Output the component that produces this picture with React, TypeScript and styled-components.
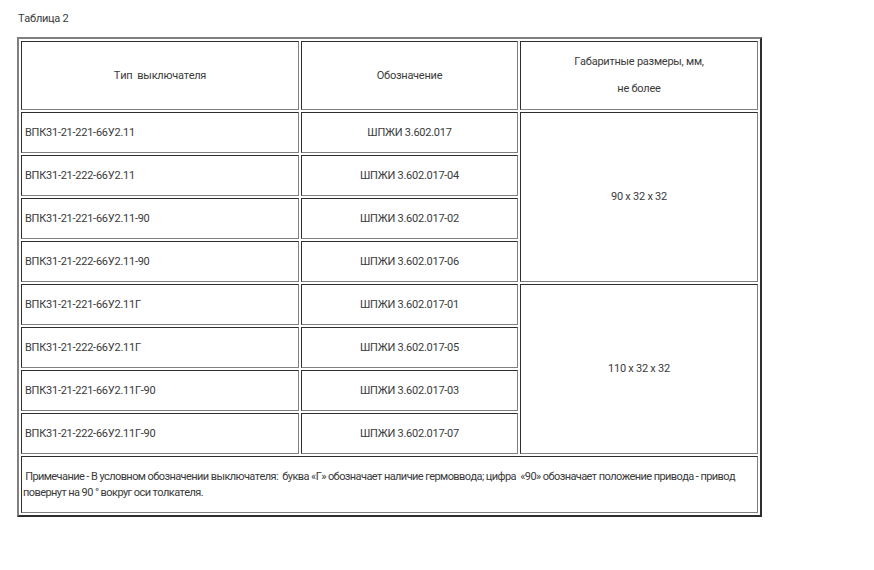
import React from 'react'
import styled, { createGlobalStyle } from 'styled-components'

const GlobalStyle = createGlobalStyle`
  html, body {
    margin: 0;
    padding: 0;
    background: #fff;
  }
  body {
    font-family: 'Roboto', 'Liberation Sans', sans-serif;
    font-size: 11px;
    letter-spacing: -0.25px;
    font-kerning: none;
    color: #3a3a3a;
  }
`

const Page = styled.div`
  padding: 12px 0 0 17px;
`

const Caption = styled.div`
  height: 25px;
  line-height: 14px;
  padding-left: 1px;
`

const Table = styled.table`
  box-sizing: border-box;
  width: 745px;
  table-layout: fixed;
  border-collapse: separate;
  border-spacing: 2px;
  border: 2px solid;
  border-color: #808080 #2e2e2e #2e2e2e #808080;
`

const Cell = styled.td<{ $align?: 'left' | 'center'; $h: number }>`
  box-sizing: border-box;
  height: ${(p) => p.$h}px;
  padding: 0 3px;
  border: 1px solid;
  border-color: #2e2e2e #808080 #808080 #2e2e2e;
  text-align: ${(p) => p.$align || 'left'};
  vertical-align: middle;
  line-height: 14px;
`

const HeadLine = styled.p`
  margin: 0;
  & + & {
    margin-top: 13px;
  }
`

const Note = styled(Cell)`
  padding: 0 1px;
  line-height: 16px;
  letter-spacing: -0.58px;
`

const rows = [
  ['ВПК31-21-221-66У2.11', 'ШПЖИ 3.602.017'],
  ['ВПК31-21-222-66У2.11', 'ШПЖИ 3.602.017-04'],
  ['ВПК31-21-221-66У2.11-90', 'ШПЖИ 3.602.017-02'],
  ['ВПК31-21-222-66У2.11-90', 'ШПЖИ 3.602.017-06'],
  ['ВПК31-21-221-66У2.11Г', 'ШПЖИ 3.602.017-01'],
  ['ВПК31-21-222-66У2.11Г', 'ШПЖИ 3.602.017-05'],
  ['ВПК31-21-221-66У2.11Г-90', 'ШПЖИ 3.602.017-03'],
  ['ВПК31-21-222-66У2.11Г-90', 'ШПЖИ 3.602.017-07'],
]

const App: React.FC = () => {
  return (
    <Page>
      <GlobalStyle />
      <Caption>Таблица 2</Caption>
      <Table>
        <colgroup>
          <col style={{ width: 278 }} />
          <col style={{ width: 217 }} />
          <col style={{ width: 238 }} />
        </colgroup>
        <tbody>
          <tr>
            <Cell $h={69} $align="center">
              Тип&nbsp; выключателя
            </Cell>
            <Cell $h={69} $align="center">
              Обозначение
            </Cell>
            <Cell $h={69} $align="center">
              <HeadLine>Габаритные размеры, мм,</HeadLine>
              <HeadLine>не более</HeadLine>
            </Cell>
          </tr>
          {rows.map(([type, code], i) => (
            <tr key={type}>
              <Cell $h={41}>{type}</Cell>
              <Cell $h={41} $align="center">
                {code}
              </Cell>
              {i % 4 === 0 && (
                <Cell $h={41} $align="center" rowSpan={4}>
                  {i === 0 ? '90 х 32 х 32' : '110 х 32 х 32'}
                </Cell>
              )}
            </tr>
          ))}
          <tr>
            <Note $h={57} colSpan={3}>
              &nbsp;Примечание - В условном обозначении выключателя:&nbsp; буква «Г» обозначает наличие
              гермоввода; цифра&nbsp; «90» обозначает положение привода - привод повернут на 90 ° вокруг
              оси толкателя.
            </Note>
          </tr>
        </tbody>
      </Table>
    </Page>
  )
}

export default App
